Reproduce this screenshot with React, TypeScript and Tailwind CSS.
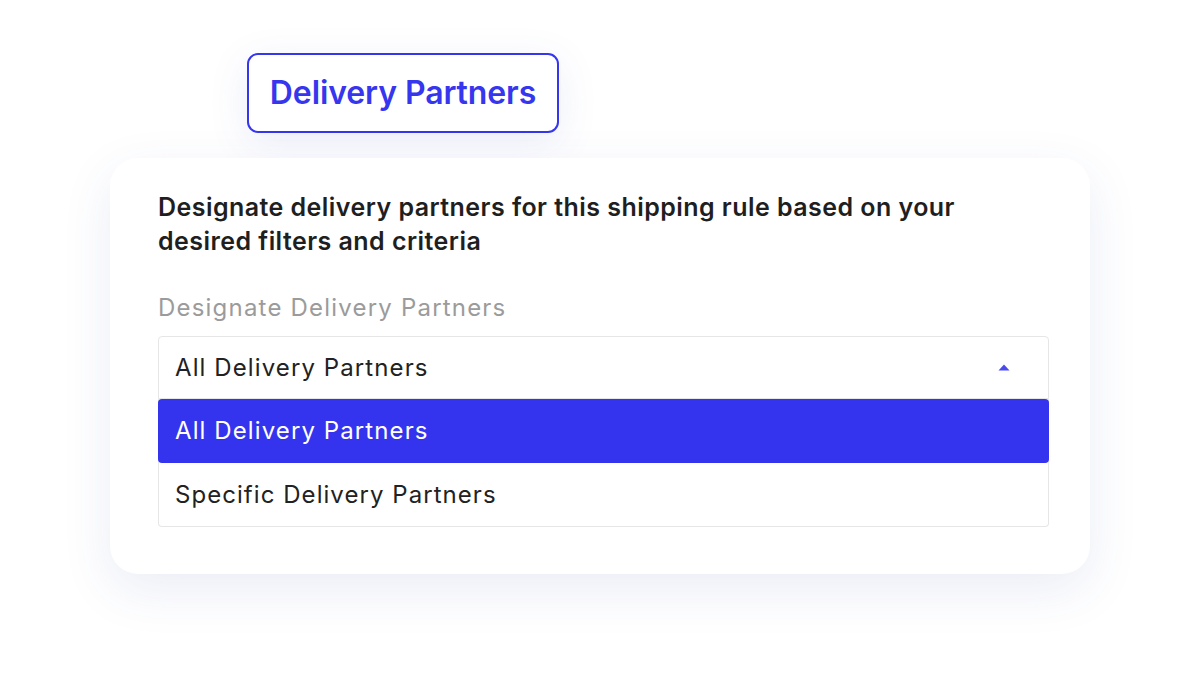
const options = ["All Delivery Partners", "Specific Delivery Partners"]

export default function App() {
  const selected = options[0]

  return (
    <div className="h-[674px] w-[1200px] overflow-hidden bg-white font-['Inter',sans-serif]">
      <div className="flex flex-col items-start pt-[53px]">
        <div className="ml-[247px] flex h-[80px] w-[312px] items-center justify-center rounded-[11px] border-2 border-[#3636ee] bg-white shadow-[0_10px_40px_rgba(70,90,190,0.10)]">
          <span className="text-[32px] font-semibold tracking-[-0.1px] text-[#3636ee]">Delivery Partners</span>
        </div>

        <div className="ml-[110px] mt-[25px] w-[980px] rounded-[28px] bg-white pb-[47px] pl-12 pr-[41px] pt-[32px] shadow-[0_16px_50px_rgba(60,80,170,0.10)]">
          <p className="text-[25px] font-semibold leading-[34px] tracking-[0.45px] text-[#1f1f1f]">
            Designate delivery partners for this shipping rule based on your
            <br />
            desired filters and criteria
          </p>

          <label className="mt-[33px] block text-[24px] leading-[34px] tracking-[1.2px] text-[#9b9b9b]">
            Designate Delivery Partners
          </label>

          <div className="mt-[11px]">
            <div className="flex h-[63px] items-center justify-between rounded-t-[4px] border border-[#e6e6e6] pl-4 pr-[38px]">
              <span className="text-[24px] tracking-[1.1px] text-[#222]">{selected}</span>
              <svg width="12" height="7" viewBox="0 0 12 7">
                <path d="M6 0.5 L11.5 6.5 H0.5 Z" fill="#4a4aee" />
              </svg>
            </div>
            <ul className="rounded-b-[4px] border border-t-0 border-[#e6e6e6]">
              {options.map((o) => (
                <li
                  key={o}
                  className={
                    o === selected
                      ? "-mx-px flex h-[64px] items-center rounded-[4px] bg-[#3434ef] pl-[17px] text-[24px] tracking-[1.1px] text-white"
                      : "flex h-[63px] items-center pl-4 text-[24px] tracking-[1.05px] text-[#222]"
                  }
                >
                  {o}
                </li>
              ))}
            </ul>
          </div>
        </div>
      </div>
    </div>
  )
}
